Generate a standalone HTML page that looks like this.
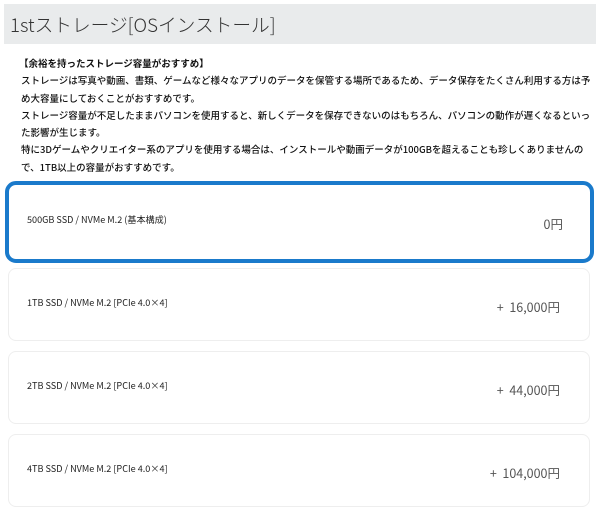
<!DOCTYPE html>
<html><head><meta charset="utf-8"><style>
body{margin:0;width:600px;height:510px;background:#fff;font-family:"Liberation Sans","Noto Sans CJK JP",sans-serif;color:#222;overflow:hidden;position:relative}
.hd{position:absolute;left:4px;top:4px;width:592px;height:40px;background:#e9ebec}
.hd span{position:absolute;left:6px;top:7px;font-size:18.7px;color:#333;font-family:"Noto Sans CJK JP",sans-serif;font-weight:300}
.tx{position:absolute;left:21px;top:55px;width:580px;font-size:9.5px;line-height:17.3px;font-family:"Noto Sans CJK JP",sans-serif;color:#111;white-space:nowrap;font-weight:500}
.tx b{display:block;margin-left:-2px}
.c{position:absolute;left:8px;width:582px;height:73px;border:1px solid #eee;border-radius:8px;box-sizing:border-box}
.c .l{position:absolute;left:18px;top:26px;font-size:9.1px;font-family:"Noto Sans CJK JP",sans-serif;color:#222}
.c .p{position:absolute;right:29px;top:28px;font-size:12.5px;color:#555;font-family:"Noto Sans CJK JP",sans-serif}
.sel{left:5px;top:181px;width:589px;height:82px;border:4px solid #1a7acb;border-radius:11px}
.sel .l{left:18px;top:27px}.sel .p{right:27px;top:29px}
</style></head><body>
<div class="hd"><span>1stストレージ[OSインストール]</span></div>
<div class="tx"><b>【余裕を持ったストレージ容量がおすすめ】</b>ストレージは写真や動画、書類、ゲームなど様々なアプリのデータを保管する場所であるため、データ保存をたくさん利用する方は予<br>め大容量にしておくことがおすすめです。<br>ストレージ容量が不足したままパソコンを使用すると、新しくデータを保存できないのはもちろん、パソコンの動作が遅くなるといっ<br>た影響が生じます。<br>特に3Dゲームやクリエイター系のアプリを使用する場合は、インストールや動画データが100GBを超えることも珍しくありませんの<br>で、1TB以上の容量がおすすめです。</div>
<div class="c sel"><span class="l">500GB SSD / NVMe M.2 (基本構成)</span><span class="p">0円</span></div>
<div class="c" style="top:268px"><span class="l">1TB SSD / NVMe M.2 [PCIe 4.0×4]</span><span class="p">+ &nbsp;16,000円</span></div>
<div class="c" style="top:351px"><span class="l">2TB SSD / NVMe M.2 [PCIe 4.0×4]</span><span class="p">+ &nbsp;44,000円</span></div>
<div class="c" style="top:434px"><span class="l">4TB SSD / NVMe M.2 [PCIe 4.0×4]</span><span class="p">+ &nbsp;104,000円</span></div>
</body></html>
